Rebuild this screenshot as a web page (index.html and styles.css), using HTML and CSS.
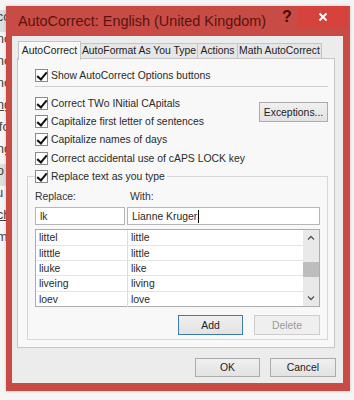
FILE: index.html
```html
<!doctype html>
<html>
<head>
<meta charset="utf-8">
<title>AutoCorrect</title>
<link rel="stylesheet" href="styles.css">
</head>
<body>
<ul class="pageList">
	<li class="sel">Acc</li>
	<li>Enc</li>
	<li>Enc</li>
	<li>Enc</li>
	<li class="ul">Eng</li>
	<li>Info</li>
	<li>Eng</li>
	<li class="sel">Po</li>
	<li>Fu</li>
	<li class="ul">Sch</li>
	<li>Am</li>
</ul>

<div class="dialog">
	<div class="titleBar">
		<span class="title">AutoCorrect: English (United Kingdom)</span>
		<span class="help">?</span>
		<span class="close"><svg width="10" height="10" viewBox="0 0 10 10"><path d="M1.5 1.5 L8.5 8.5 M8.5 1.5 L1.5 8.5" stroke="#fff" stroke-width="2"/></svg></span>
	</div>
	<div class="client">
		<ul class="tabList">
			<li class="ac">AutoCorrect</li>
			<li class="t2">AutoFormat As You Type</li>
			<li class="t3">Actions</li>
			<li class="t4">Math AutoCorrect</li>
		</ul>
		<div class="tabCont">
			<label class="chk first"><i class="box"></i>Show AutoCorrect Options buttons</label>
			<div class="sep"></div>
			<div class="opts">
				<div class="optList">
					<label class="chk"><i class="box"></i>Correct TWo INitial CApitals</label>
					<label class="chk"><i class="box"></i>Capitalize first letter of sentences</label>
					<label class="chk"><i class="box"></i>Capitalize names of days</label>
					<label class="chk"><i class="box"></i>Correct accidental use of cAPS LOCK key</label>
				</div>
				<span class="btn exc">Exceptions...</span>
			</div>
			<fieldset class="group">
				<legend><label class="chk"><i class="box"></i>Replace text as you type</label></legend>
				<div class="labels"><span>Replace:</span><span>With:</span></div>
				<div class="inputs">
					<span class="field">lk</span>
					<span class="field">Lianne Kruger<i class="caret"></i></span>
				</div>
				<div class="list">
					<div class="rows">
						<div class="row"><span>littel</span><span>little</span></div>
						<div class="row"><span>litttle</span><span>little</span></div>
						<div class="row"><span>liuke</span><span>like</span></div>
						<div class="row"><span>liveing</span><span>living</span></div>
						<div class="row"><span>loev</span><span>love</span></div>
					</div>
					<div class="scroll">
						<svg class="arr" width="16" height="16" viewBox="0 0 16 16"><path d="M5 9.5 L8 6.5 L11 9.5" fill="none" stroke="#555" stroke-width="1.3"/></svg>
						<div class="track"><div class="thumb"></div></div>
						<svg class="arr" width="16" height="16" viewBox="0 0 16 16"><path d="M5 6.5 L8 9.5 L11 6.5" fill="none" stroke="#555" stroke-width="1.3"/></svg>
					</div>
				</div>
				<div class="actions">
					<span class="btn def">Add</span>
					<span class="btn off">Delete</span>
				</div>
			</fieldset>
		</div>
		<div class="footer">
			<span class="btn">OK</span>
			<span class="btn">Cancel</span>
		</div>
	</div>
</div>
</body>
</html>
```
FILE: styles.css
```css
*{ margin:0; padding:0; box-sizing:border-box;}
ul{ list-style:none;}
body{ width:354px; height:400px; overflow:hidden; background:#f5f5f5; font-family:"Liberation Sans",Arial,sans-serif; font-size:10.4px; color:#2a2a2a; position:relative;}

/* page behind the dialog */
.pageList{ padding-top:10px; margin-left:-14px; width:60px;}
.pageList li{ height:22px; line-height:13px; padding-left:2px; font-size:13px; color:#444;}
.pageList .sel{ background:#dedede;}
.pageList .ul{ text-decoration:underline;}

/* dialog window */
.dialog{ position:absolute; left:6px; top:6px; width:344px; height:385px; background:#c84b45; padding:0 7px 8px 6px; display:flex; flex-direction:column; box-shadow:0 0 3px rgba(0,0,0,.2);}
.titleBar{ height:30px; display:flex; align-items:center; position:relative;}
.title{ margin-left:6px; font-size:14.4px; color:#5a1310;}
.help{ position:absolute; left:270px; top:2px; font-size:16px; font-weight:bold; color:#3a0d0a;}
.close{ position:absolute; left:285px; top:0; width:51px; height:22px; background:#d6423c; display:flex; align-items:center; justify-content:center;}
.client{ flex:1; background:#ececec; padding:5px 8px 0 5px; display:flex; flex-direction:column;}

/* tabs */
.tabList{ display:flex; padding-left:1px; height:17px; align-items:flex-end; position:relative; z-index:1;}
.tabList li{ height:15px; line-height:14px; text-align:center; border:1px solid #c4c4c4; border-bottom:none; margin-left:-1px; background:#e6e6e6; color:#222; white-space:nowrap;}
.tabList .ac{ width:63px; height:19px; margin-bottom:-2px; background:#f8f8f8; line-height:17px; margin-left:0;}
.tabList .t2{ width:118px;}
.tabList .t3{ width:41px;}
.tabList .t4{ width:85px;}
.tabCont{ height:290px; border:1px solid #c6c6c6; background:#f8f8f8; padding:7px 6px 0 17px;}

/* checkboxes */
.chk{ display:flex; align-items:center; height:18px; white-space:nowrap;}
.box{ width:13px; height:13px; border:1px solid #8a8a8a; background:#fff; margin-right:3px; flex:none; position:relative;}
.box::after{ content:""; position:absolute; left:3px; top:0; width:4px; height:8px; border:solid #111; border-width:0 2px 2px 0; transform:rotate(40deg);}
.sep{ height:1px; background:#cfcfcf; margin:2px 0 7px 0;}
.opts{ display:flex; justify-content:space-between;}
.optList .chk{ height:18.3px;}

/* buttons */
.btn{ display:inline-flex; align-items:center; justify-content:center; height:20px; border:1px solid #acacac; background:linear-gradient(#f0f0f0,#e2e2e2); color:#222;}
.exc{ width:69px; margin-top:8px;}
.def{ width:65px; border-color:#3d7bad;}
.off{ width:66px; border-color:#cdcdcd; background:#efefef; color:#9a9a9a;}

/* group box */
.group{ margin:0 0 0 -8px; width:301px; height:173px; border:1px solid #d6d6d6; padding:0 7px;}
.group legend{ padding:0 2px 0 0;}
.labels{ display:flex; height:20px; line-height:20px; color:#333; margin-top:2px;}
.labels span:first-child{ width:95px;}
.inputs{ display:flex; gap:2px; height:18px;}
.field{ display:flex; align-items:center; border:1px solid #b6b6b6; background:#fff; padding-left:4px; height:18px;}
.field:first-child{ width:90px;}
.field:last-child{ flex:1;}
.caret{ width:1px; height:13px; background:#000; margin-left:1px;}

/* list */
.list{ margin-top:4px; height:78px; border:1px solid #acacac; background:#fff; display:flex;}
.rows{ flex:1;}
.row{ display:flex; height:15.4px; line-height:15px; border-bottom:1px solid #e4e4e4;}
.row:last-child{ border-bottom:none;}
.row span{ padding-left:3px;}
.row span:first-child{ width:92px; border-right:1px solid #dcdcdc;}
.scroll{ width:16px; background:#e9e9e9; display:flex; flex-direction:column;}
.arr{ display:block; flex:none;}
.track{ flex:1; padding-top:16px;}
.thumb{ height:15px; background:#bdbdbd;}
.actions{ display:flex; justify-content:flex-end; gap:11px; margin-top:8px;}

/* footer */
.footer{ display:flex; justify-content:flex-end; gap:10px; padding-top:10px; margin-right:-1px;}
.footer .btn{ height:19px;}
.footer .btn:first-child{ width:65px;}
.footer .btn:last-child{ width:66px;}
```
